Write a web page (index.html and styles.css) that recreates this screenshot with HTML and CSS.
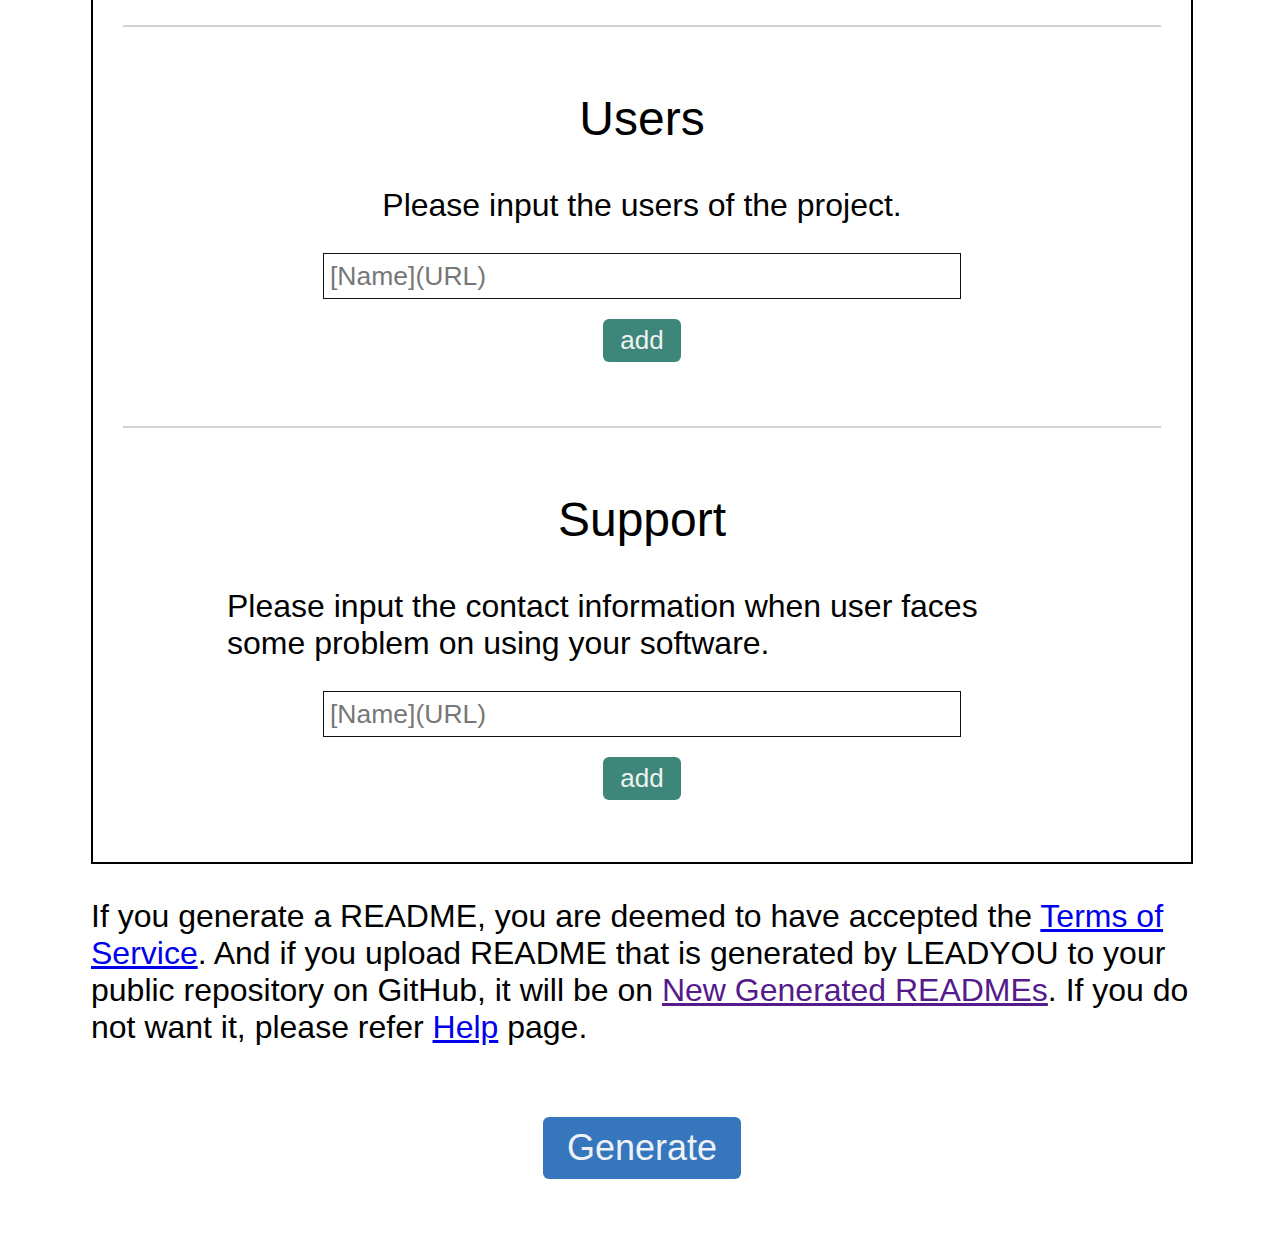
FILE: index.html
```html
<!DOCTYPE html>
<html lang="en">
<head>
<meta charset="utf-8">
<title>README generator</title>
<link rel="stylesheet" href="styles.css">
</head>
<body>
<div class="page">
  <div class="form-box">
    <section class="field">
      <div class="rule"></div>
      <h2 class="field-title">Users</h2>
      <div class="desc-wrap"><p class="desc">Please input the users of the project.</p></div>
      <div class="input-row"><input class="text-input" type="text" placeholder="[Name](URL)"></div>
      <div class="btn-row"><button class="add-btn" type="button">add</button></div>
    </section>
    <section class="field">
      <div class="rule"></div>
      <h2 class="field-title">Support</h2>
      <div class="desc-wrap"><p class="desc">Please input the contact information when user faces some problem on using your software.</p></div>
      <div class="input-row"><input class="text-input" type="text" placeholder="[Name](URL)"></div>
      <div class="btn-row"><button class="add-btn" type="button">add</button></div>
    </section>
  </div>
  <p class="notice">If you generate a README, you are deemed to have accepted the <a href="#terms" class="link">Terms of Service</a>. And if you upload README that is generated by LEADYOU to your public repository on GitHub, it will be on <a href="#new" class="link visited">New Generated READMEs</a>. If you do not want it, please refer <a href="#help" class="link">Help</a> page.</p>
  <div class="generate-row"><button class="generate-btn" type="button">Generate</button></div>
</div>
</body>
</html>
```

FILE: styles.css
```css
html, body {
  margin: 0;
  padding: 0;
  background: #fff;
}

body {
  font-family: "Liberation Sans", Arial, Helvetica, sans-serif;
  font-size: 32px;
  color: #000;
}

.page {
  width: 1102px;
  margin-left: 91px;
  padding-bottom: 57px;
}

.form-box {
  box-sizing: border-box;
  width: 1102px;
  border: 2px solid #000;
  border-top: none;
  padding: 25px 30px 62px;
}

.field {
  display: flex;
  flex-direction: column;
  align-items: stretch;
}

.field + .field .rule {
  margin-top: 64px;
}

.rule {
  height: 2px;
  background: #d3d3d3;
}

.field-title {
  margin: 64px 0 0;
  font-size: 48px;
  font-weight: normal;
  line-height: 55px;
  text-align: center;
}

.desc-wrap {
  text-align: center;
  margin-top: 41px;
}

.desc {
  display: inline-block;
  max-width: 830px;
  margin: 0;
  text-align: left;
  line-height: 37px;
}

.input-row {
  display: flex;
  justify-content: center;
  margin-top: 29px;
}

.text-input {
  box-sizing: border-box;
  width: 638px;
  height: 46px;
  padding: 0 6px;
  border: 1px solid #111;
  border-radius: 0;
  font-family: "Liberation Sans", Arial, Helvetica, sans-serif;
  font-size: 26.5px;
  color: #000;
  outline: none;
}

.text-input::placeholder {
  color: #777;
}

.btn-row {
  display: flex;
  justify-content: center;
  margin-top: 20px;
}

.add-btn {
  box-sizing: border-box;
  width: 78px;
  height: 43px;
  padding: 0;
  border: none;
  border-radius: 6px;
  background: #3f867a;
  color: #eef2f1;
  font-family: "Liberation Sans", Arial, Helvetica, sans-serif;
  font-size: 26px;
  line-height: 43px;
}

.notice {
  margin: 34px 0 0;
  line-height: 37px;
}

.link {
  color: #0000ee;
  text-decoration: underline;
}

.link.visited {
  color: #551a8b;
}

.generate-row {
  display: flex;
  justify-content: center;
  margin-top: 71px;
}

.generate-btn {
  box-sizing: border-box;
  width: 198px;
  height: 62px;
  padding: 0;
  border: none;
  border-radius: 6px;
  background: #3676bd;
  color: #eef2f7;
  font-family: "Liberation Sans", Arial, Helvetica, sans-serif;
  font-size: 36px;
  line-height: 62px;
}
```
